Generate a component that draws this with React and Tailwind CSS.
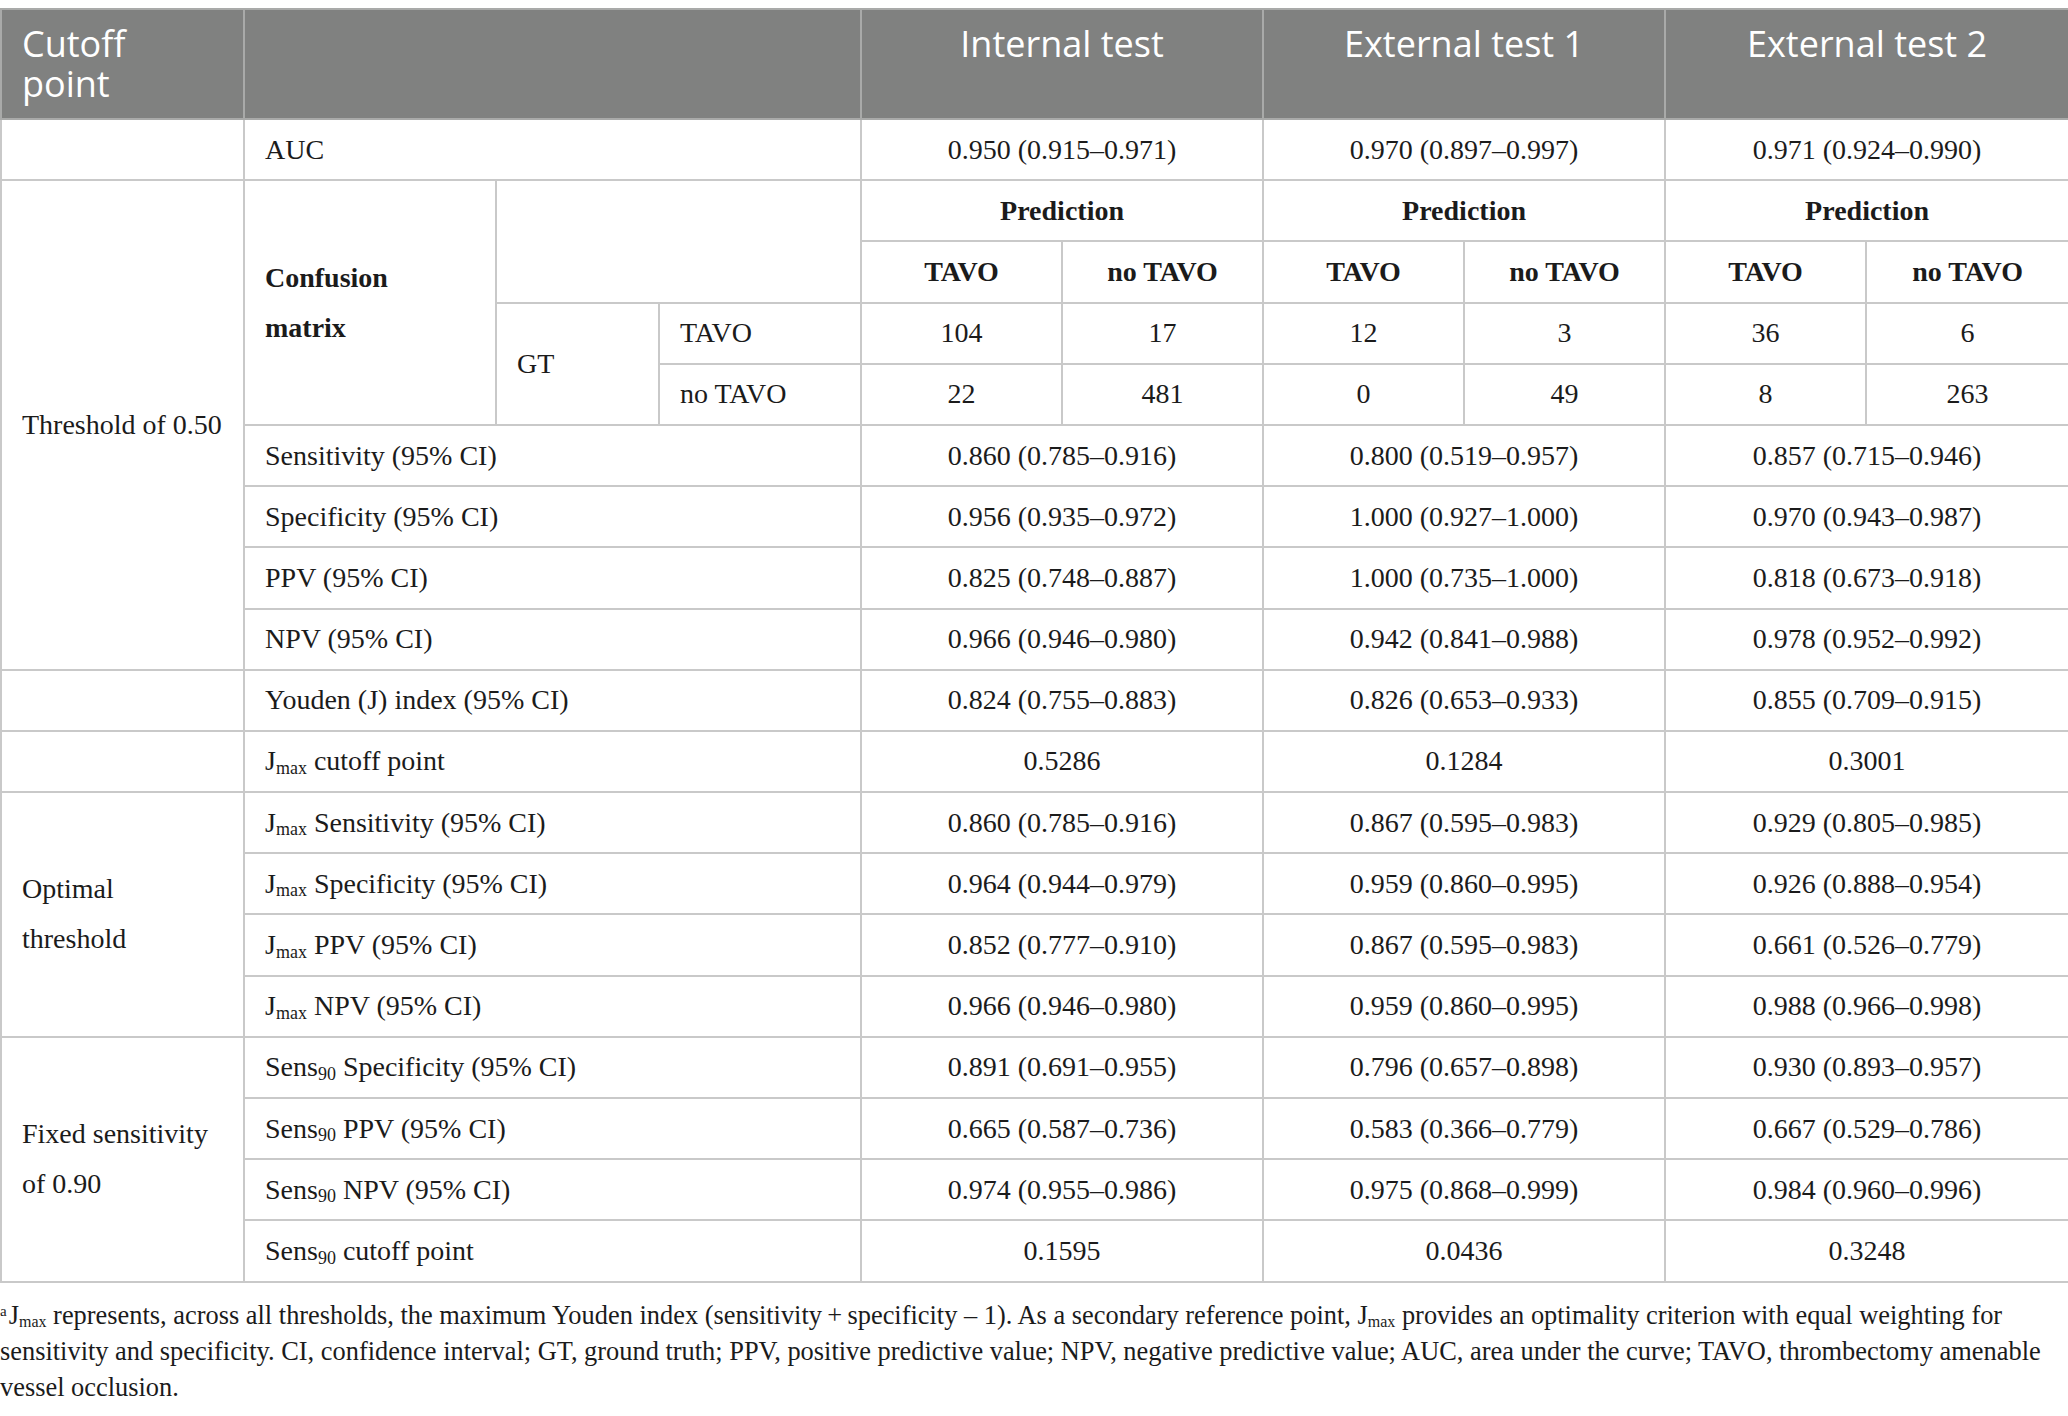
import React from 'react';

const serif = "font-['Liberation_Serif','Times_New_Roman',serif]";
const sans = "font-['Open_Sans','Noto_Sans',sans-serif]";

const td = 'border-2 border-[#c9c9c9] px-[20px] py-[4.6px] leading-[50px] align-middle';
const num = td + ' text-center';
const th = 'border-2 border-[#a9aaa9] font-normal align-top pt-[14px] pb-[14px]';

const J = ({ children }) => (
    <>J<sub className='text-[18px] bottom-[-0.2em]'>max</sub> {children}</>
);
const S = ({ children }) => (
    <>Sens<sub className='text-[18px] bottom-[-0.2em]'>90</sub> {children}</>
);

const Row = ({ label, values }) => (
    <tr>
        <td colSpan={3} className={td}>{label}</td>
        {values.map((v, i) => (
            <td key={i} colSpan={2} className={num}>{v}</td>
        ))}
    </tr>
);

const App = () => {
    return (
        <div className={`bg-white text-[#1b1b1b] pt-[8px] ${serif} text-[28px]`}>
            <table className='table-fixed border-collapse w-[2068px]'>
                <colgroup>
                    <col className='w-[243px]' />
                    <col className='w-[252px]' />
                    <col className='w-[163px]' />
                    <col className='w-[202px]' />
                    <col className='w-[201px]' />
                    <col className='w-[201px]' />
                    <col className='w-[201px]' />
                    <col className='w-[201px]' />
                    <col className='w-[201px]' />
                    <col className='w-[203px]' />
                </colgroup>
                <thead>
                    <tr className={`bg-[#808180] text-white ${sans} text-[36px] leading-[40px]`}>
                        <th className={th + ' text-left px-[20px]'}>Cutoff<br />point</th>
                        <th colSpan={3} className={th}></th>
                        <th colSpan={2} className={th}>Internal test</th>
                        <th colSpan={2} className={th}>External test 1</th>
                        <th colSpan={2} className={th}>External test 2</th>
                    </tr>
                </thead>
                <tbody>
                    <tr>
                        <td className={td}></td>
                        <td colSpan={3} className={td}>AUC</td>
                        <td colSpan={2} className={num}>0.950 (0.915–0.971)</td>
                        <td colSpan={2} className={num}>0.970 (0.897–0.997)</td>
                        <td colSpan={2} className={num}>0.971 (0.924–0.990)</td>
                    </tr>
                    <tr>
                        <td rowSpan={8} className={td}>Threshold of 0.50</td>
                        <td rowSpan={4} className={td + ' font-bold'}>Confusion<br />matrix</td>
                        <td rowSpan={2} colSpan={2} className={td}></td>
                        <td colSpan={2} className={num + ' font-bold'}>Prediction</td>
                        <td colSpan={2} className={num + ' font-bold'}>Prediction</td>
                        <td colSpan={2} className={num + ' font-bold'}>Prediction</td>
                    </tr>
                    <tr>
                        {['TAVO', 'no TAVO', 'TAVO', 'no TAVO', 'TAVO', 'no TAVO'].map((t, i) => (
                            <td key={i} className={num + ' font-bold'}>{t}</td>
                        ))}
                    </tr>
                    <tr>
                        <td rowSpan={2} className={td}>GT</td>
                        <td className={td}>TAVO</td>
                        {['104', '17', '12', '3', '36', '6'].map((t, i) => (
                            <td key={i} className={num}>{t}</td>
                        ))}
                    </tr>
                    <tr>
                        <td className={td}>no TAVO</td>
                        {['22', '481', '0', '49', '8', '263'].map((t, i) => (
                            <td key={i} className={num}>{t}</td>
                        ))}
                    </tr>
                    <Row label='Sensitivity (95% CI)' values={['0.860 (0.785–0.916)', '0.800 (0.519–0.957)', '0.857 (0.715–0.946)']} />
                    <Row label='Specificity (95% CI)' values={['0.956 (0.935–0.972)', '1.000 (0.927–1.000)', '0.970 (0.943–0.987)']} />
                    <Row label='PPV (95% CI)' values={['0.825 (0.748–0.887)', '1.000 (0.735–1.000)', '0.818 (0.673–0.918)']} />
                    <Row label='NPV (95% CI)' values={['0.966 (0.946–0.980)', '0.942 (0.841–0.988)', '0.978 (0.952–0.992)']} />

                    <tr>
                        <td className={td}></td>
                        <td colSpan={3} className={td}>Youden (J) index (95% CI)</td>
                        <td colSpan={2} className={num}>0.824 (0.755–0.883)</td>
                        <td colSpan={2} className={num}>0.826 (0.653–0.933)</td>
                        <td colSpan={2} className={num}>0.855 (0.709–0.915)</td>
                    </tr>
                    <tr>
                        <td className={td}></td>
                        <td colSpan={3} className={td}><J>cutoff point</J></td>
                        <td colSpan={2} className={num}>0.5286</td>
                        <td colSpan={2} className={num}>0.1284</td>
                        <td colSpan={2} className={num}>0.3001</td>
                    </tr>

                    <tr>
                        <td rowSpan={4} className={td}>Optimal<br />threshold</td>
                        <td colSpan={3} className={td}><J>Sensitivity (95% CI)</J></td>
                        <td colSpan={2} className={num}>0.860 (0.785–0.916)</td>
                        <td colSpan={2} className={num}>0.867 (0.595–0.983)</td>
                        <td colSpan={2} className={num}>0.929 (0.805–0.985)</td>
                    </tr>
                    <Row label={<J>Specificity (95% CI)</J>} values={['0.964 (0.944–0.979)', '0.959 (0.860–0.995)', '0.926 (0.888–0.954)']} />
                    <Row label={<J>PPV (95% CI)</J>} values={['0.852 (0.777–0.910)', '0.867 (0.595–0.983)', '0.661 (0.526–0.779)']} />
                    <Row label={<J>NPV (95% CI)</J>} values={['0.966 (0.946–0.980)', '0.959 (0.860–0.995)', '0.988 (0.966–0.998)']} />

                    <tr>
                        <td rowSpan={4} className={td}>Fixed sensitivity<br />of 0.90</td>
                        <td colSpan={3} className={td}><S>Specificity (95% CI)</S></td>
                        <td colSpan={2} className={num}>0.891 (0.691–0.955)</td>
                        <td colSpan={2} className={num}>0.796 (0.657–0.898)</td>
                        <td colSpan={2} className={num}>0.930 (0.893–0.957)</td>
                    </tr>
                    <Row label={<S>PPV (95% CI)</S>} values={['0.665 (0.587–0.736)', '0.583 (0.366–0.779)', '0.667 (0.529–0.786)']} />
                    <Row label={<S>NPV (95% CI)</S>} values={['0.974 (0.955–0.986)', '0.975 (0.868–0.999)', '0.984 (0.960–0.996)']} />
                    <Row label={<S>cutoff point</S>} values={['0.1595', '0.0436', '0.3248']} />
                </tbody>
            </table>

            <p className='mt-[14px] text-[26.4px] leading-[36px]'>
                <sup className='text-[15px] leading-none mr-[2px]'>a</sup>J<sub className='text-[16px] leading-none bottom-[-0.2em]'>max</sub> represents, across all thresholds, the maximum Youden index (sensitivity{'\u2009'}+{'\u2009'}specificity – 1). As a secondary reference point, J<sub className='text-[16px] leading-none bottom-[-0.2em]'>max</sub> provides an optimality criterion with equal weighting for sensitivity and specificity. CI, confidence interval; GT, ground truth; PPV, positive predictive value; NPV, negative predictive value; AUC, area under the curve; TAVO, thrombectomy amenable vessel occlusion.
            </p>
        </div>
    );
};

export default App;
